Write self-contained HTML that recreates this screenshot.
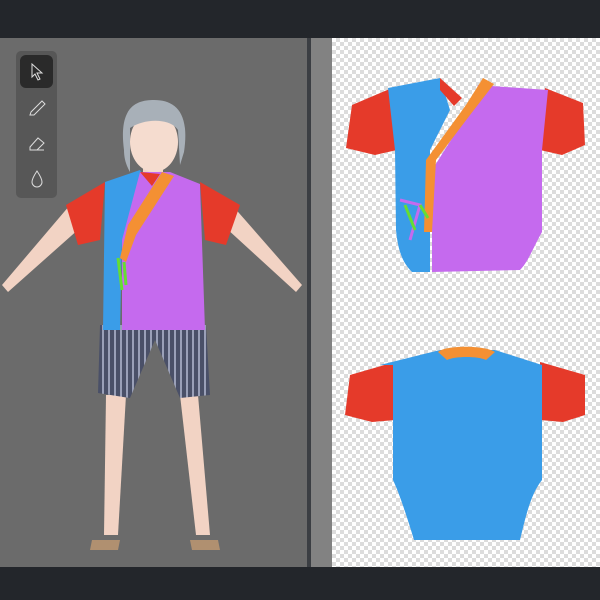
<!DOCTYPE html>
<html><head><meta charset="utf-8"><style>
body{margin:0;width:600px;height:600px;background:#23262b;position:relative;overflow:hidden;font-family:"Liberation Sans",sans-serif}
.l{position:absolute;left:0;top:38px;width:307px;height:529px;background:#6b6b6b}
.d{position:absolute;left:307px;top:38px;width:4px;height:529px;background:#3b3e43}
.g{position:absolute;left:311px;top:38px;width:21px;height:529px;background:#828282}
.c{position:absolute;left:332px;top:38px;width:268px;height:529px;background-color:#fff;background-image:conic-gradient(#dcdcdc 25%,#fff 25% 50%,#dcdcdc 50% 75%,#fff 75%);background-size:8px 8px}
.tb{position:absolute;left:16px;top:51px;width:41px;height:147px;background:#575757;border-radius:5px}
.sel{position:absolute;left:20px;top:55px;width:33px;height:33px;background:#2a2a2a;border-radius:6px}
svg{position:absolute;left:0;top:0}
</style></head><body>
<div class="l"></div><div class="d"></div><div class="g"></div><div class="c"></div>
<div class="tb"></div><div class="sel"></div>
<svg width="600" height="600" fill="none" stroke="#ddd" stroke-width="1">
<path d="M32 64 L32 77 L35 74 L38 80 L40 79 L37 73 L42 73 Z"/>
<path d="M31 112 L42 101 L45 104 L34 115 L30 115 Z"/>
<path d="M30 147 L38 138 L44 143 L37 150 L30 150 Z M30 150 L44 150"/>
<path d="M37 171 C33 177 32 180 32 182 A5 5 0 0 0 42 182 C42 180 41 177 37 171 Z"/>
</svg>
<svg width="600" height="600">
<defs><pattern id="st" width="6" height="10" patternUnits="userSpaceOnUse"><rect width="6" height="10" fill="#4a5068"/><rect width="2" height="10" fill="#9aa0b8"/></pattern></defs>
<g fill="#f2d3c4">
<path d="M70 205 L2 285 L8 292 L80 228 Z"/>
<path d="M232 205 L302 285 L296 292 L226 228 Z"/>
<rect x="143" y="160" width="20" height="20"/>
<path d="M106 395 L126 395 L118 535 L104 535 Z"/>
<path d="M180 395 L198 395 L210 535 L196 535 Z"/>
</g>
<ellipse cx="154" cy="142" rx="24" ry="30" fill="#f5dccf"/>
<path d="M124 150 C118 105 138 100 154 100 C175 100 190 112 184 152 L180 165 L178 130 C170 118 145 118 130 128 L130 172 C126 165 124 158 124 150Z" fill="#a8b0b8"/>
<path d="M100 325 L206 325 L210 395 L180 398 L155 340 L130 398 L98 393 Z" fill="url(#st)"/>
<path d="M92 540 L120 540 L118 550 L90 550 Z M190 540 L218 540 L220 550 L192 550 Z" fill="#b09070"/>
<path d="M66 205 L105 182 L100 240 L78 245 Z" fill="#e53a2a"/>
<path d="M240 205 L200 182 L205 240 L226 245 Z" fill="#e53a2a"/>
<path d="M105 182 L140 170 L150 190 L122 240 L120 330 L103 330 Z" fill="#3a9de8"/>
<path d="M140 172 L170 172 L200 184 L205 330 L122 330 L122 240 Z" fill="#c56aee"/>
<path d="M162 172 L174 176 L136 235 L126 262 L120 258 L128 225 Z" fill="#f49033"/>
<path d="M140 172 L152 186 L160 174 Z" fill="#e53a2a"/>
<path d="M118 258 L122 290 M124 262 L126 285" stroke="#66dd33" stroke-width="3"/>
<!-- front shirt -->
<path d="M352 105 L392 88 L397 150 L375 155 L346 148 Z" fill="#e53a2a"/>
<path d="M583 103 L545 88 L540 150 L562 155 L585 145 Z" fill="#e53a2a"/>
<path d="M388 88 L440 78 L450 110 L430 150 L430 272 L412 272 C402 262 398 250 396 230 L395 150 Z" fill="#3a9de8"/>
<path d="M478 85 L548 90 L542 150 L542 232 C532 250 528 262 520 270 L432 272 L432 170 L470 110 Z" fill="#c56aee"/>
<path d="M483 78 L494 84 L470 115 L436 160 L432 232 L424 232 L426 160 L466 105 Z" fill="#f49033"/>
<path d="M440 78 L462 98 L454 106 L440 90 Z" fill="#e53a2a"/>
<path d="M400 200 L420 205 L410 240" stroke="#c56aee" stroke-width="3" fill="none"/>
<path d="M405 205 L415 230 M420 205 L428 218" stroke="#66dd33" stroke-width="3" fill="none"/>
<!-- back shirt -->
<path d="M350 375 L395 362 L395 420 L372 422 L345 415 Z" fill="#e53a2a"/>
<path d="M585 375 L540 362 L540 420 L563 422 L585 415 Z" fill="#e53a2a"/>
<path d="M380 365 L440 350 L495 350 L542 365 L542 480 C530 495 525 520 520 540 L414 540 C408 520 400 495 393 480 L393 365 Z" fill="#3a9de8"/>
<path d="M438 352 C445 345 485 345 495 352 L486 360 C478 356 455 356 447 360 Z" fill="#f49033"/>
</svg>
</body></html>
